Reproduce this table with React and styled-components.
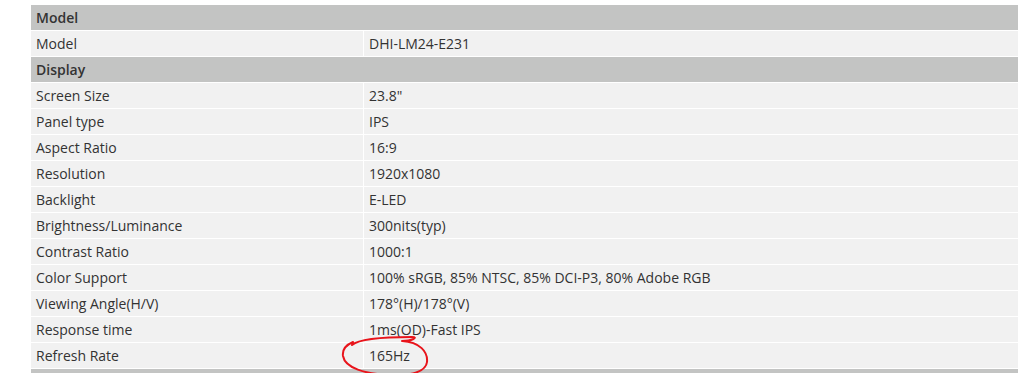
import React from 'react';
import styled, { createGlobalStyle } from 'styled-components';

const GlobalStyle = createGlobalStyle`
  html, body {
    margin: 0;
    padding: 0;
    background: #ffffff;
  }
  body {
    font-family: "Open Sans", "Liberation Sans", Arial, sans-serif;
  }
`;

const Wrapper = styled.div`
  position: relative;
  padding: 5px 0 0 31px;
  width: 987px;
`;

const SpecTable = styled.table`
  width: 987px;
  border-collapse: separate;
  border-spacing: 0;
  table-layout: fixed;
  font-size: 14px;
  color: #333333;
  border-bottom: 4px solid #c3c4c3;
`;

const GroupRow = styled.tr`
  background: #c3c4c3;
`;

const GroupCell = styled.th`
  height: 25px;
  padding: 0 5px;
  text-align: left;
  font-weight: 600;
  line-height: 25px;
  border-bottom: 1px solid #ffffff;
`;

const SpecRow = styled.tr`
  background: #f1f1f1;
`;

const Cell = styled.td`
  height: 25px;
  padding: 0 5px;
  line-height: 25px;
  white-space: nowrap;
  border-bottom: 1px solid #ffffff;
  border-left: ${(p) => (p.$value ? '1px solid #ffffff' : 'none')};
`;

// hand-drawn red loop marking the refresh rate
const Mark = styled.svg`
  position: absolute;
  left: 0;
  top: 0;
  width: 1019px;
  height: 376px;
  pointer-events: none;
  overflow: visible;
`;

const specs = [
  { group: 'Model', rows: [['Model', 'DHI-LM24-E231']] },
  {
    group: 'Display',
    rows: [
      ['Screen Size', '23.8"'],
      ['Panel type', 'IPS'],
      ['Aspect Ratio', '16:9'],
      ['Resolution', '1920x1080'],
      ['Backlight', 'E-LED'],
      ['Brightness/Luminance', '300nits(typ)'],
      ['Contrast Ratio', '1000:1'],
      ['Color Support', '100% sRGB, 85% NTSC, 85% DCI-P3, 80% Adobe RGB'],
      ['Viewing Angle(H/V)', '178°(H)/178°(V)'],
      ['Response time', '1ms(OD)-Fast IPS'],
      ['Refresh Rate', '165Hz'],
    ],
  },
];

export default function App() {
  return (
    <Wrapper>
      <GlobalStyle />
      <SpecTable>
        <colgroup>
          <col style={{ width: 332 }} />
          <col />
        </colgroup>
        <tbody>
          {specs.map((section) => (
            <React.Fragment key={section.group}>
              <GroupRow>
                <GroupCell colSpan={2}>{section.group}</GroupCell>
              </GroupRow>
              {section.rows.map(([label, value]) => (
                <SpecRow key={label}>
                  <Cell>{label}</Cell>
                  <Cell $value>{value}</Cell>
                </SpecRow>
              ))}
            </React.Fragment>
          ))}
        </tbody>
      </SpecTable>
      <Mark viewBox="0 0 1019 376">
        <path
          d="M352 345 C360 338 390 337 412 337 C419 337 412 341 402 341 C420 342 428 352 427 362 C426 372 410 376 390 375 C365 374 345 368 343 356 C342 349 346 345 353 342"
          fill="none"
          stroke="#e8141b"
          strokeWidth="2"
          strokeLinecap="round"
          strokeLinejoin="round"
        />
      </Mark>
    </Wrapper>
  );
}
